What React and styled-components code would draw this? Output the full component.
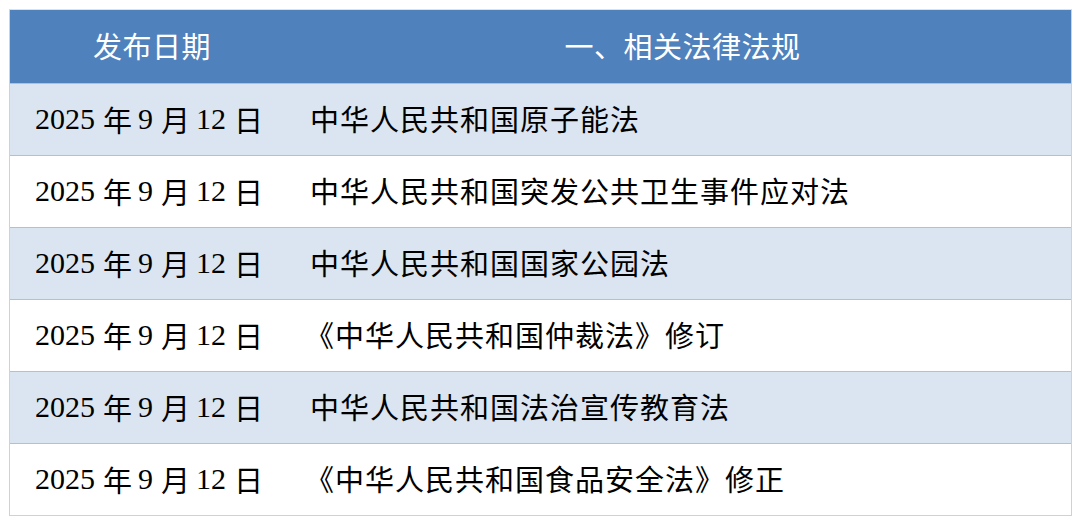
import React from "react";
import styled, { createGlobalStyle } from "styled-components";

const GlobalStyle = createGlobalStyle`
  html, body {
    margin: 0;
    padding: 0;
    background: #fff;
  }
  body {
    font-family: "Noto Sans CJK SC", "Noto Sans", sans-serif;
  }
`;

const rows = [
  { date: ["2025", "9", "12"], title: "中华人民共和国原子能法" },
  { date: ["2025", "9", "12"], title: "中华人民共和国突发公共卫生事件应对法" },
  { date: ["2025", "9", "12"], title: "中华人民共和国国家公园法" },
  { date: ["2025", "9", "12"], title: "《中华人民共和国仲裁法》修订", quoted: true },
  { date: ["2025", "9", "12"], title: "中华人民共和国法治宣传教育法" },
  { date: ["2025", "9", "12"], title: "《中华人民共和国食品安全法》修正", quoted: true },
];

const Page = styled.div`
  padding: 9px 8px 0 9px;
`;

const Table = styled.div`
  width: 1061px;
  border: 1px solid #c3d4ea;
  border-top-color: #d6e2f1;
`;

const HeaderRow = styled.div`
  display: grid;
  grid-template-columns: 284px 1fr;
  height: 73px;
  background: #4f81bd;
  color: #fff;
`;

const HeaderCell = styled.div`
  display: flex;
  align-items: center;
  justify-content: center;
  font-size: 29px;
  padding-bottom: 4px;
  letter-spacing: 0.5px;
`;

const Row = styled.div`
  display: grid;
  grid-template-columns: 284px 1fr;
  height: 71px;
  background: ${(p) => (p.$shaded ? "#dbe5f1" : "#ffffff")};
  border-top: 1px solid #a9c2e1;
`;

const DateCell = styled.div`
  display: flex;
  align-items: center;
  padding-left: 25px;
  padding-bottom: 2px;
  font-family: "Liberation Serif", "Noto Sans CJK SC", serif;
  font-size: 30px;
  color: #000;
  white-space: nowrap;
`;

const Han = styled.span`
  font-family: "Noto Sans CJK SC", sans-serif;
  font-size: 29px;
  margin: 0 6px 0 8px;
`;

const TitleCell = styled.div`
  display: flex;
  align-items: center;
  padding-left: ${(p) => (p.$quoted ? "11px" : "16px")};
  padding-bottom: 4px;
  font-size: 29px;
  letter-spacing: 1px;
  color: #000;
  white-space: nowrap;
`;

export default function App() {
  return (
    <Page>
      <GlobalStyle />
      <Table>
        <HeaderRow>
          <HeaderCell>发布日期</HeaderCell>
          <HeaderCell>一、相关法律法规</HeaderCell>
        </HeaderRow>
        {rows.map((r, i) => (
          <Row key={i} $shaded={i % 2 === 0}>
            <DateCell>
              {r.date[0]}<Han>年</Han>{r.date[1]}<Han>月</Han>{r.date[2]}<Han>日</Han>
            </DateCell>
            <TitleCell $quoted={r.quoted}>{r.title}</TitleCell>
          </Row>
        ))}
      </Table>
    </Page>
  );
}
